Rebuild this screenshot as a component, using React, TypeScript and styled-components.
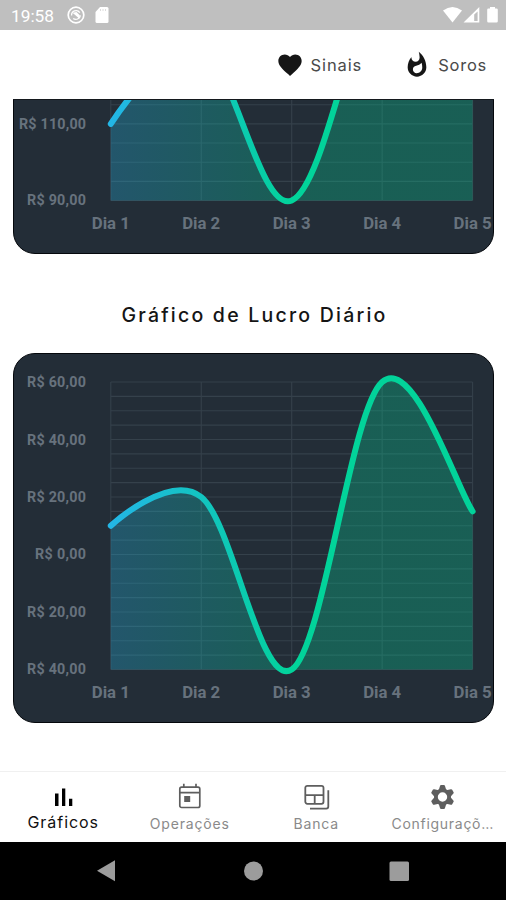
import React from "react";
import styled, { createGlobalStyle } from "styled-components";
import { MdFavorite, MdWhatshot } from "react-icons/md";

const GlobalStyle = createGlobalStyle`
  * { box-sizing: border-box; }
  html, body { margin: 0; padding: 0; background: #fff; overflow: hidden; }
`;

const Screen = styled.div`
  width: 506px;
  height: 900px;
  display: flex;
  flex-direction: column;
  background: #fff;
  font-family: Inter, "Liberation Sans", sans-serif;
  overflow: hidden;
`;

const StatusBar = styled.div`
  flex: none;
  height: 30px;
  background: #bfbfbf;
  color: #fff;
  display: flex;
  align-items: center;
  justify-content: space-between;
  padding: 0 8px 0 11px;
`;

const StatusGroup = styled.div<{ $gap: number }>`
  display: flex;
  align-items: center;
  gap: ${(p) => p.$gap}px;
`;

const Clock = styled.span`
  font: 400 17.3px/20px Roboto, sans-serif;
  width: 43px;
  margin: 1px 3px 0 0;
  white-space: nowrap;
`;

const TopBar = styled.header`
  flex: none;
  height: 69px;
  display: flex;
  justify-content: flex-end;
  align-items: center;
  gap: 41px;
  padding: 0 19px 0 0;
`;

const TopAction = styled.button<{ $spacing: number }>`
  display: flex;
  align-items: center;
  gap: 7px;
  border: 0;
  padding: 0;
  background: none;
  color: #4a4a4a;
  font: 400 16.5px/22px Inter, sans-serif;
  letter-spacing: ${(p) => p.$spacing}px;
  svg { color: #161616; }
`;

const Content = styled.main`
  flex: 1;
  min-height: 0;
  overflow: hidden;
  display: flex;
  flex-direction: column;
  padding: 0 12px 0 13px;
`;

const ClippedCard = styled.div`
  flex: none;
  height: 155px;
  display: flex;
  flex-direction: column;
  justify-content: flex-end;
  overflow: hidden;
  border-top: 1px solid #14181d;
`;

const Card = styled.section`
  flex: none;
  width: 481px;
  height: 370px;
  border: 1px solid #05080c;
  border-radius: 22px;
  background: #232d37;
  overflow: hidden;
`;

const ChartTitle = styled.h2`
  margin: 50px 0 26px;
  height: 23px;
  text-align: center;
  color: #151515;
  font: 500 19.5px/23px Inter, sans-serif;
  letter-spacing: 2.22px;
  padding-left: 2px;
  white-space: nowrap;
`;

const Plot = styled.svg`
  display: block;
  text {
    font-family: Roboto, sans-serif;
    font-weight: 700;
    fill: #67727d;
  }
`;

const NavBar = styled.nav`
  flex: none;
  height: 71px;
  border-top: 1px solid #f0f0f0;
  display: grid;
  grid-template-columns: repeat(4, 1fr);
`;

const NavItem = styled.button<{ $active?: boolean; $spacing: number }>`
  border: 0;
  padding: 11px 0 0;
  background: none;
  display: flex;
  flex-direction: column;
  align-items: center;
  gap: ${(p) => (p.$active ? 1 : 3)}px;
  color: ${(p) => (p.$active ? "#000" : "#5e5e5e")};
  white-space: nowrap;
  span {
    color: ${(p) => (p.$active ? "#111" : "#8a8a8a")};
    font: 400 ${(p) => (p.$active ? 16 : 14)}px/22px Inter, sans-serif;
    letter-spacing: ${(p) => p.$spacing}px;
  }
`;

const NavIcon = styled.svg`
  width: 27px;
  height: 27px;
  flex: none;
`;

const SystemBar = styled.div`
  flex: none;
  height: 58px;
  background: #000;
  display: flex;
  justify-content: center;
`;

const Y_BOTTOM = 315.5;
const X_LEFT = 96.8;
const X_STEP = 90.45;

type ChartProps = {
  id: string;
  values: number[];
  yLabels: { text: string; y: number; width: number }[];
  pxPerUnit: number;
  minValue: number;
  lines: number;
  lineStep: number;
};

// Smooths the series with control points placed along neighbouring chords.
function curve(points: number[][]) {
  const s = 0.35;
  const tangent = (i: number) => {
    if (i === 0) return [0, 0];
    const a = points[i - 1];
    const b = points[Math.min(i + 1, points.length - 1)];
    return [((b[0] - a[0]) / 2) * s, ((b[1] - a[1]) / 2) * s];
  };
  let d = `M${points[0].join(" ")}`;
  for (let i = 1; i < points.length; i++) {
    const p = points[i - 1];
    const q = points[i];
    const t0 = tangent(i - 1);
    const t1 = tangent(i);
    d += ` C${p[0] + t0[0]} ${p[1] + t0[1]} ${q[0] - t1[0]} ${q[1] - t1[1]} ${q[0]} ${q[1]}`;
  }
  return d;
}

function LineChart({ id, values, yLabels, pxPerUnit, minValue, lines, lineStep }: ChartProps) {
  const pts = values.map((v, i) => [X_LEFT + i * X_STEP, Y_BOTTOM - (v - minValue) * pxPerUnit]);
  const d = curve(pts);
  const right = X_LEFT + 4 * X_STEP;
  return (
    <Plot width="479" height="368" viewBox="0 0 479 368">
      <defs>
        <linearGradient id={id} gradientUnits="userSpaceOnUse" x1={X_LEFT} x2={X_LEFT + 181} y1="0" y2="0">
          <stop offset="0" stopColor="#23b6e6" />
          <stop offset="1" stopColor="#02d39a" />
        </linearGradient>
      </defs>
      <g stroke="#35414b" strokeWidth="1.1">
        {Array.from({ length: lines }, (_, i) => (
          <line key={i} x1={X_LEFT} x2={right} y1={Y_BOTTOM - i * lineStep} y2={Y_BOTTOM - i * lineStep} />
        ))}
        {values.map((_, i) => (
          <line key={i} x1={X_LEFT + i * X_STEP} x2={X_LEFT + i * X_STEP} y1={Y_BOTTOM} y2="28" />
        ))}
      </g>
      <path d={`${d} L${right} ${Y_BOTTOM} L${X_LEFT} ${Y_BOTTOM} Z`} fill={`url(#${id})`} opacity="0.3" />
      <path d={d} fill="none" stroke={`url(#${id})`} strokeWidth="6" strokeLinecap="round" />
      {yLabels.map((l) => (
        <text key={l.y} x={72 - l.width} y={l.y + 5} fontSize="14.3" textLength={l.width}>
          {l.text}
        </text>
      ))}
      {values.map((_, i) => (
        <text key={i} x={X_LEFT + i * X_STEP - 19} y={Y_BOTTOM + 28} fontSize="16.8" textLength="38">
          {`Dia ${i + 1}`}
        </text>
      ))}
    </Plot>
  );
}

const balanceLabels = [
  { text: "R$ 110,00", y: 238.6, width: 67 },
  { text: "R$ 90,00", y: 315.3, width: 59 },
];

const profitLabels = [
  { text: "R$ 60,00", y: 28, width: 59 },
  { text: "R$ 40,00", y: 85.5, width: 59 },
  { text: "R$ 20,00", y: 143, width: 59 },
  { text: "R$ 0,00", y: 200.3, width: 51 },
  { text: "R$ 20,00", y: 257.8, width: 59 },
  { text: "R$ 40,00", y: 315.3, width: 59 },
];

const gearTeeth = [0, 60, 120, 180, 240, 300];

export default function App() {
  return (
    <Screen>
      <GlobalStyle />
      <StatusBar>
        <StatusGroup $gap={10}>
          <Clock>19:58</Clock>
          <svg width="18" height="18" viewBox="0 0 18 18" fill="none" stroke="#fff">
            <circle cx="9" cy="9" r="7.8" strokeWidth="1.7" />
            <path d="M4.600 9.500A4.500 4.500 0 0 1 12.800 6.600M13.400 9.400A4.500 4.500 0 0 1 6.200 12.400" strokeWidth="1.3" />
            <path d="M5.500 6.800L9.500 6l3.300 3.200-.6 3.300z" fill="#fff" stroke="none" />
          </svg>
          <svg width="14" height="16" viewBox="0 0 14 16">
            <path d="M5 0h7a1.5 1.5 0 0 1 1.5 1.500v13A1.500 1.500 0 0 1 12 16H2a1.500 1.500 0 0 1-1.500-1.500V5z" fill="#fff" />
            <path d="M5.500 2v2M8 2v2M10.500 2v2" stroke="#dcdcdc" />
          </svg>
        </StatusGroup>
        <StatusGroup $gap={0}>
          <svg width="55" height="18" viewBox="0 0 55 18" fill="#fff">
            <path d="M0 4.600Q9.500-2.600 19 4.600L9.500 16.500z" />
            <path fillRule="evenodd" d="M36.300 1v15.600H20.500zM31.200 8.500v6.600h3.400V5.500z" />
            <path d="M47 1h5v1.500h1.500q1.300 0 1.300 1.300v11.500q0 1.300-1.300 1.300h-8q-1.300 0-1.300-1.300V3.800q0-1.300 1.300-1.300H47z" />
          </svg>
        </StatusGroup>
      </StatusBar>

      <TopBar>
        <TopAction $spacing={0.9}>
          <MdFavorite size={28} />
          Sinais
        </TopAction>
        <TopAction $spacing={0.75}>
          <MdWhatshot size={28} />
          Soros
        </TopAction>
      </TopBar>

      <Content>
        <ClippedCard>
          <Card>
            <LineChart
              id="balance"
              values={[110, 130, 90, 150, 165]}
              yLabels={balanceLabels}
              pxPerUnit={3.83}
              minValue={90}
              lines={16}
              lineStep={19.15}
            />
          </Card>
        </ClippedCard>
        <ChartTitle>Gráfico de Lucro Diário</ChartTitle>
        <Card>
          <LineChart
            id="profit"
            values={[10, 20, -40, 60, 15]}
            yLabels={profitLabels}
            pxPerUnit={2.875}
            minValue={-40}
            lines={21}
            lineStep={14.375}
          />
        </Card>
      </Content>

      <NavBar>
        <NavItem $active $spacing={0.95}>
          <NavIcon viewBox="0 0 27 27" fill="currentColor">
            <path d="M5 10.500h3.500V23H5zM12 5.500h3.300V23H12zM19 15.800h3.300V23H19z" />
          </NavIcon>
          <span>Gráficos</span>
        </NavItem>
        <NavItem $spacing={0.85}>
          <NavIcon viewBox="0 0 27 27" fill="none" stroke="currentColor" strokeWidth="1.7">
            <rect x="3.800" y="4.200" width="20" height="20.300" rx="1.800" />
            <path d="M3.800 9.600h20M7.800 4.200V.8M20 4.200V.8" />
            <rect x="8.200" y="13" width="6" height="6" fill="currentColor" stroke="none" />
          </NavIcon>
          <span>Operações</span>
        </NavItem>
        <NavItem $spacing={0.8}>
          <NavIcon viewBox="0 0 27 27" fill="none" stroke="currentColor" strokeWidth="1.8">
            <rect x="2.300" y="2.800" width="18.200" height="18" rx="2" />
            <path d="M2.300 12.200h18.200M11.700 12.200v8.600M25.300 7.200v16.400q0 2-2 2H7" />
          </NavIcon>
          <span>Banca</span>
        </NavItem>
        <NavItem $spacing={0.72}>
          <NavIcon viewBox="0 0 27 27">
            <circle cx="13.500" cy="14" r="6.600" fill="none" stroke="currentColor" strokeWidth="3.800" />
            {gearTeeth.map((a) => (
              <path
                key={a}
                transform={`rotate(${a} 13.5 14)`}
                d="M9.600 7.500L11 2.900q.2-.9 1.100-.9h2.800q.9 0 1.100.9l1.400 4.600z"
                fill="currentColor"
              />
            ))}
          </NavIcon>
          <span>Configuraçõ…</span>
        </NavItem>
      </NavBar>

      <SystemBar>
        <svg width="506" height="58" viewBox="0 0 506 58" fill="#9c9c9c">
          <path d="M97 28.800L115 18.300V39.300Z" />
          <circle cx="253.500" cy="29" r="9.500" />
          <rect x="389.500" y="19.500" width="19.500" height="19.500" rx="1.500" />
        </svg>
      </SystemBar>
    </Screen>
  );
}
